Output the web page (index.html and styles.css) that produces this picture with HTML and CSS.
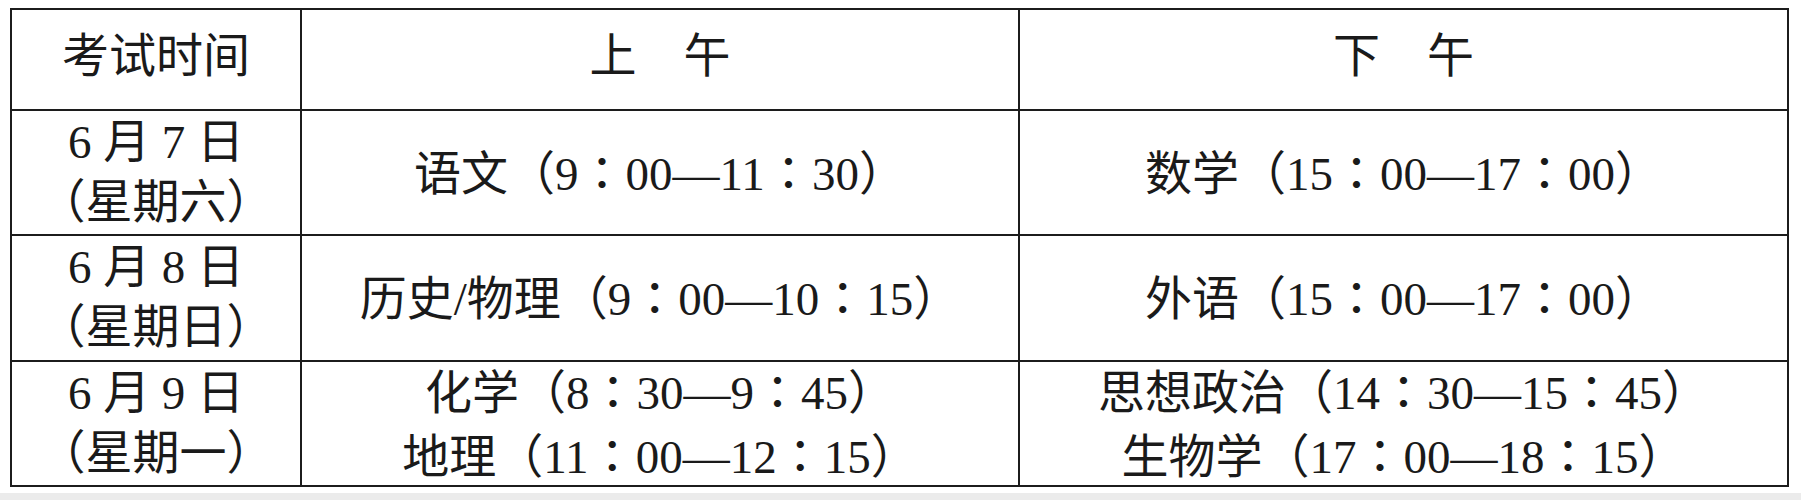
FILE: index.html
```html
<!DOCTYPE html>
<html lang="en">
<head>
<meta charset="utf-8">
<title>考试时间安排</title>
<link rel="stylesheet" href="styles.css">
</head>
<body>
<main class="page">
  <div class="schedule">
    <div class="cell head">考试时间</div>
    <div class="cell head">上　午</div>
    <div class="cell head">下　午</div>

    <div class="cell"><span>6 月 7 日</span><span>（星期六）</span></div>
    <div class="cell"><span>语文（9<i class="colon">：</i>00—11<i class="colon">：</i>30）</span></div>
    <div class="cell"><span>数学（15<i class="colon">：</i>00—17<i class="colon">：</i>00）</span></div>

    <div class="cell"><span>6 月 8 日</span><span>（星期日）</span></div>
    <div class="cell"><span>历史/物理（9<i class="colon">：</i>00—10<i class="colon">：</i>15）</span></div>
    <div class="cell"><span>外语（15<i class="colon">：</i>00—17<i class="colon">：</i>00）</span></div>

    <div class="cell"><span>6 月 9 日</span><span>（星期一）</span></div>
    <div class="cell"><span>化学（8<i class="colon">：</i>30—9<i class="colon">：</i>45）</span><span>地理（11<i class="colon">：</i>00—12<i class="colon">：</i>15）</span></div>
    <div class="cell"><span>思想政治（14<i class="colon">：</i>30—15<i class="colon">：</i>45）</span><span>生物学（17<i class="colon">：</i>00—18<i class="colon">：</i>15）</span></div>
  </div>
</main>
<div class="strip"></div>
</body>
</html>
```
FILE: styles.css
```css
html, body {
  margin: 0;
  padding: 0;
  background: #ffffff;
}
body {
  width: 1801px;
  height: 500px;
  overflow: hidden;
}
.page {
  height: 493px;
  box-sizing: border-box;
  padding: 8px 0 0 10px;
}
.schedule {
  display: grid;
  grid-template-columns: 290px 718px 769px;
  grid-template-rows: 101px 125px 126px 125px;
  width: max-content;
  border-top: 2px solid #1c1c1c;
  border-left: 2px solid #1c1c1c;
  font-family: "Liberation Serif", "Noto Sans CJK SC", serif;
  font-size: 47px;
  font-weight: 400;
  color: #1a1a1a;
}
.cell {
  box-sizing: border-box;
  border-right: 2px solid #1c1c1c;
  border-bottom: 2px solid #1c1c1c;
  display: flex;
  flex-direction: column;
  justify-content: center;
  align-items: center;
  line-height: 60px;
  white-space: nowrap;
  padding-bottom: 2px;
}
.head {
  padding-bottom: 8px;
}
.colon {
  font-style: normal;
  font-family: "Noto Sans CJK TC", sans-serif;
}
.strip {
  height: 7px;
  background: #ebebeb;
}
```
